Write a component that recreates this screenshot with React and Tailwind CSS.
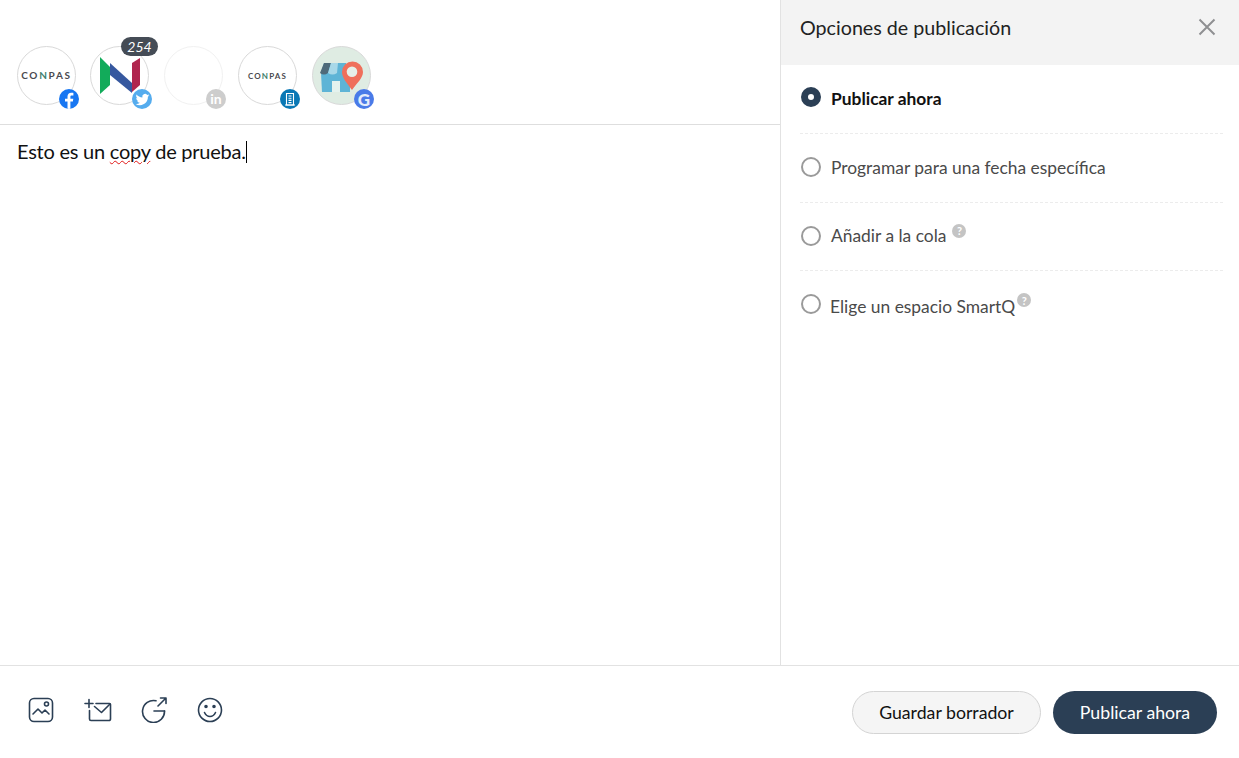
import React from 'react';

const Badge = ({ className, children }) => (
  <span className={`absolute left-[42px] top-[43px] flex h-[20px] w-[20px] items-center justify-center overflow-hidden rounded-full ${className}`}>
    {children}
  </span>
);

const ConpasLogo = ({ className }) => (
  <span className={`font-bold text-[#4a4a4f] ${className}`}>
    CO<span className="text-[#3f7f6f]">N</span>PAS
  </span>
);

const Avatar = ({ className = 'border-[#d9d9d9]', wrapClass = '', badge, children }) => (
  <div className={`relative h-[59px] w-[59px] shrink-0 ${wrapClass}`}>
    <div className={`flex h-[59px] w-[59px] items-center justify-center overflow-hidden rounded-full border ${className}`}>
      {children}
    </div>
    {badge}
  </div>
);

const Help = ({ className = '' }) => (
  <span className={`inline-flex h-[14px] w-[14px] items-center justify-center rounded-full bg-[#c4c4c4] text-[11px] font-bold leading-none text-white ${className}`}>?</span>
);

const Option = ({ selected, label, help, rowClass, radioClass = '', textClass = '' }) => (
  <div className={`flex items-center ${rowClass}`}>
    {selected ? (
      <span className="ml-[1px] h-[20px] w-[20px] shrink-0 -translate-y-[2px] rounded-full border-[7px] border-[#2b3f55] bg-white" />
    ) : (
      <span className={`ml-[1px] h-[20px] w-[20px] shrink-0 -translate-y-[1px] rounded-full border-2 border-[#9a9a9a] bg-white ${radioClass}`} />
    )}
    <span className={`text-[17.4px] ${selected ? 'ml-[10px] font-bold text-[#111111]' : 'text-[#4a4a4a]'} ${textClass}`}>{label}</span>
    {help}
  </div>
);

const App = () => {
  return (
    <div className="flex h-[758px] w-[1239px] flex-col overflow-hidden bg-white font-['Lato','Open_Sans',sans-serif]">
      <div className="flex min-h-0 flex-1 border-b border-[#e2e2e2]">
        {/* Editor */}
        <div className="flex w-[781px] shrink-0 flex-col border-r border-[#e2e2e2]">
          <div className="flex h-[125px] items-start gap-[14px] border-b border-[#dedede] pl-[17px] pt-[46px]">
            <Avatar
              badge={
                <Badge className="bg-[#1877f2]">
                  <svg viewBox="0 0 20 20" className="h-[20px] w-[20px]" fill="#fff">
                    <path d="M11.4 20v-7.4h2.5l.4-2.9h-2.9V7.900c0-.9.3-1.400 1.500-1.400h1.500V3.900c-.3 0-1.200-.1-2.200-.1-2.200 0-3.700 1.300-3.700 3.800v2.100H6v2.900h2.500V20z" />
                  </svg>
                </Badge>
              }
            >
              <ConpasLogo className="text-[10px] tracking-[0.17em]" />
            </Avatar>

            <div className="relative">
              <Avatar
                badge={
                  <Badge className="bg-[#55acee]">
                    <svg viewBox="0 0 24 24" className="h-[15px] w-[15px]" fill="#fff">
                      <path d="M23 5.300c-.8.4-1.700.6-2.600.7.9-.6 1.600-1.400 2-2.500-.9.5-1.800.9-2.900 1.100A4.500 4.500 0 0 0 11.800 8.800C8 8.600 4.700 6.800 2.500 4.100c-1.200 2.100-.6 4.700 1.400 6-.7 0-1.400-.2-2-.6 0 2.200 1.500 4.100 3.600 4.500-.7.2-1.400.2-2 .1.600 1.800 2.200 3.100 4.200 3.100A9 9 0 0 1 1 19c2 1.300 4.400 2 6.900 2 8.400 0 13-7.100 12.700-13.400.9-.6 1.700-1.400 2.400-2.300z" />
                    </svg>
                  </Badge>
                }
              >
                <svg viewBox="0 0 57 57" className="h-[57px] w-[57px]">
                  <path d="M19 16 L41 36 L41 46 L19 28 Z" fill="#36589f" />
                  <path d="M41 16 L49 11 L49 38 L41 45 Z" fill="#b0264f" />
                  <path d="M9 10 L19 20 L19 38 L9 47 Z" fill="#12ab5a" />
                </svg>
              </Avatar>
              <span className="absolute left-[31px] top-[-9px] flex h-[19px] w-[37px] items-center justify-center rounded-full bg-[#454c56] text-[14px] italic leading-none text-white">254</span>
            </div>

            <Avatar
              className="border-[#f1f1f1]"
              wrapClass="ml-[1px]"
              badge={
                <Badge className="bg-[#cdcdcd]">
                  <span className="text-[14px] font-bold leading-none text-white">in</span>
                </Badge>
              }
            />

            <Avatar
              wrapClass="ml-[1px]"
              badge={
                <Badge className="bg-[#0a78b5]">
                  <svg viewBox="0 0 20 20" className="h-[20px] w-[20px]" fill="none" stroke="#fff" strokeWidth="1.100">
                    <path d="M6.500 4.500h7v11.500h-7z" />
                    <path d="M8.500 7h3M8.500 9.200h3M8.500 11.400h3M8.500 13.600h3M5 16h10" />
                  </svg>
                </Badge>
              }
            >
              <ConpasLogo className="text-[8px] tracking-[0.14em]" />
            </Avatar>

            <Avatar
              className="border-[#d9d9d9] bg-[#dfece3]"
              wrapClass="ml-[1px]"
              badge={
                <Badge className="bg-[#4a7be8]">
                  <span className="text-[17px] font-black leading-none text-[#e4ecfb]">G</span>
                </Badge>
              }
            >
              <svg viewBox="0 0 57 57" className="h-[57px] w-[57px]">
                <path d="M8 26 L11 16 H33 L37 26 V45 H9 Z" fill="#5eb4d6" />
                <path d="M7 26 L11 16 H18 L15 26 Q11 29 7 26 Z" fill="#4f6a7a" />
                <path d="M15 26 L18 16 H25 L24 26 Q19.500 29 15 26 Z" fill="#a8d8e8" />
                <path d="M19 34 H27 V45 H19 Z" fill="#e4f2ee" />
                <path d="M39 43 C34 36 29 31 29 25 A10.500 10.500 0 0 1 50 25 C50 31 44 36 39 43 Z" fill="#ef6f5b" />
                <circle cx="39" cy="24.700" r="5.300" fill="#e6efe8" />
              </svg>
            </Avatar>
          </div>

          <div className="pl-[17px] pt-[12px] text-[20px] leading-[27px] tracking-[-0.24px] text-[#111111]">
            Esto es un <span className="underline decoration-wavy decoration-[#e01818] decoration-1 underline-offset-1">copy</span> de prueba.
            <span className="inline-block h-[22px] w-px translate-y-[4px] bg-black" />
          </div>
        </div>

        {/* Opciones */}
        <div className="flex min-w-0 flex-1 flex-col">
          <div className="flex h-[65px] shrink-0 items-center justify-between bg-[#f3f3f3] pb-[10px] pl-[19px] pr-[23px]">
            <span className="text-[19.7px] text-[#222222]">Opciones de publicación</span>
            <svg viewBox="0 0 18 18" className="mb-[2px] h-[18px] w-[18px]" fill="none" stroke="#8f9092" strokeWidth="2">
              <path d="M1.500 1.500l15 15M16.500 1.500l-15 15" />
            </svg>
          </div>
          <div className="pl-[19px] pr-[16px]">
            <Option selected label="Publicar ahora" rowClass="h-[69px] border-b border-dashed border-[#ececec]" />
            <Option label="Programar para una fecha específica" textClass="ml-[10px]" rowClass="h-[69px] border-b border-dashed border-[#ececec]" />
            <Option
              label="Añadir a la cola"
              textClass="ml-[10px]"
              rowClass="h-[68px] border-b border-dashed border-[#ececec]"
              help={<Help className="mb-[12px] ml-[6px]" />}
            />
            <Option
              label="Elige un espacio SmartQ"
              rowClass="h-[68px]"
              textClass="ml-[9px] translate-y-[2px]"
              help={<Help className="mb-[10px] ml-[2px]" />}
            />
          </div>
        </div>
      </div>

      {/* Footer */}
      <div className="flex h-[92px] shrink-0 items-center justify-between pl-[28px] pr-[22px]">
        <div className="flex items-center gap-[29.5px] pb-[4px]">
          <svg viewBox="0 0 26 26" className="h-[26px] w-[26px]" fill="none" stroke="#2b3f55" strokeWidth="1.600" strokeLinecap="round" strokeLinejoin="round">
            <rect x="1.500" y="1.500" width="23" height="23" rx="4.500" />
            <path d="M5 17l5-5 4 4 3-3 4 4" />
            <circle cx="18.500" cy="7" r="2" />
          </svg>
          <svg viewBox="0 0 28 26" className="h-[26px] w-[28px]" fill="none" stroke="#2b3f55" strokeWidth="1.600" strokeLinecap="round" strokeLinejoin="round">
            <path d="M1 6.500h8M5 2.500v8" />
            <path d="M5.500 13.500v8.500a1.500 1.500 0 0 0 1.500 1.500h18a1.500 1.500 0 0 0 1.500-1.500V7.500a1 1 0 0 0-1-1H12" />
            <path d="M10.500 9.500l7 6 8.500-8.500" />
          </svg>
          <svg viewBox="0 0 26 26" className="h-[26px] w-[26px]" fill="none" stroke="#2b3f55" strokeWidth="1.600" strokeLinecap="round" strokeLinejoin="round">
            <path d="M23.500 14a11 11 0 1 1-8.500-10.200" />
            <path d="M13 14h10.500" />
            <path d="M17 9l8-8M19.500 1H25v5.500" />
          </svg>
          <svg viewBox="0 0 26 26" className="h-[26px] w-[26px]" fill="none" stroke="#2b3f55" strokeWidth="1.600" strokeLinecap="round" strokeLinejoin="round">
            <circle cx="13" cy="13" r="11.500" />
            <path d="M7.500 15.500c1.200 2.600 3.200 4 5.500 4s4.300-1.400 5.500-4" />
            <circle cx="9" cy="9.500" r="1" fill="#2b3f55" />
            <circle cx="17" cy="9.500" r="1" fill="#2b3f55" />
          </svg>
        </div>
        <div className="flex items-center gap-[12px]">
          <button className="h-[43px] w-[189px] rounded-full border border-[#d4d4d4] bg-[#f5f5f5] pt-[2px] text-[17.7px] text-[#111111]">Guardar borrador</button>
          <button className="h-[43px] w-[164px] rounded-full bg-[#2b3f55] pt-[2px] text-[17.7px] text-white">Publicar ahora</button>
        </div>
      </div>
    </div>
  );
};

export default App;
